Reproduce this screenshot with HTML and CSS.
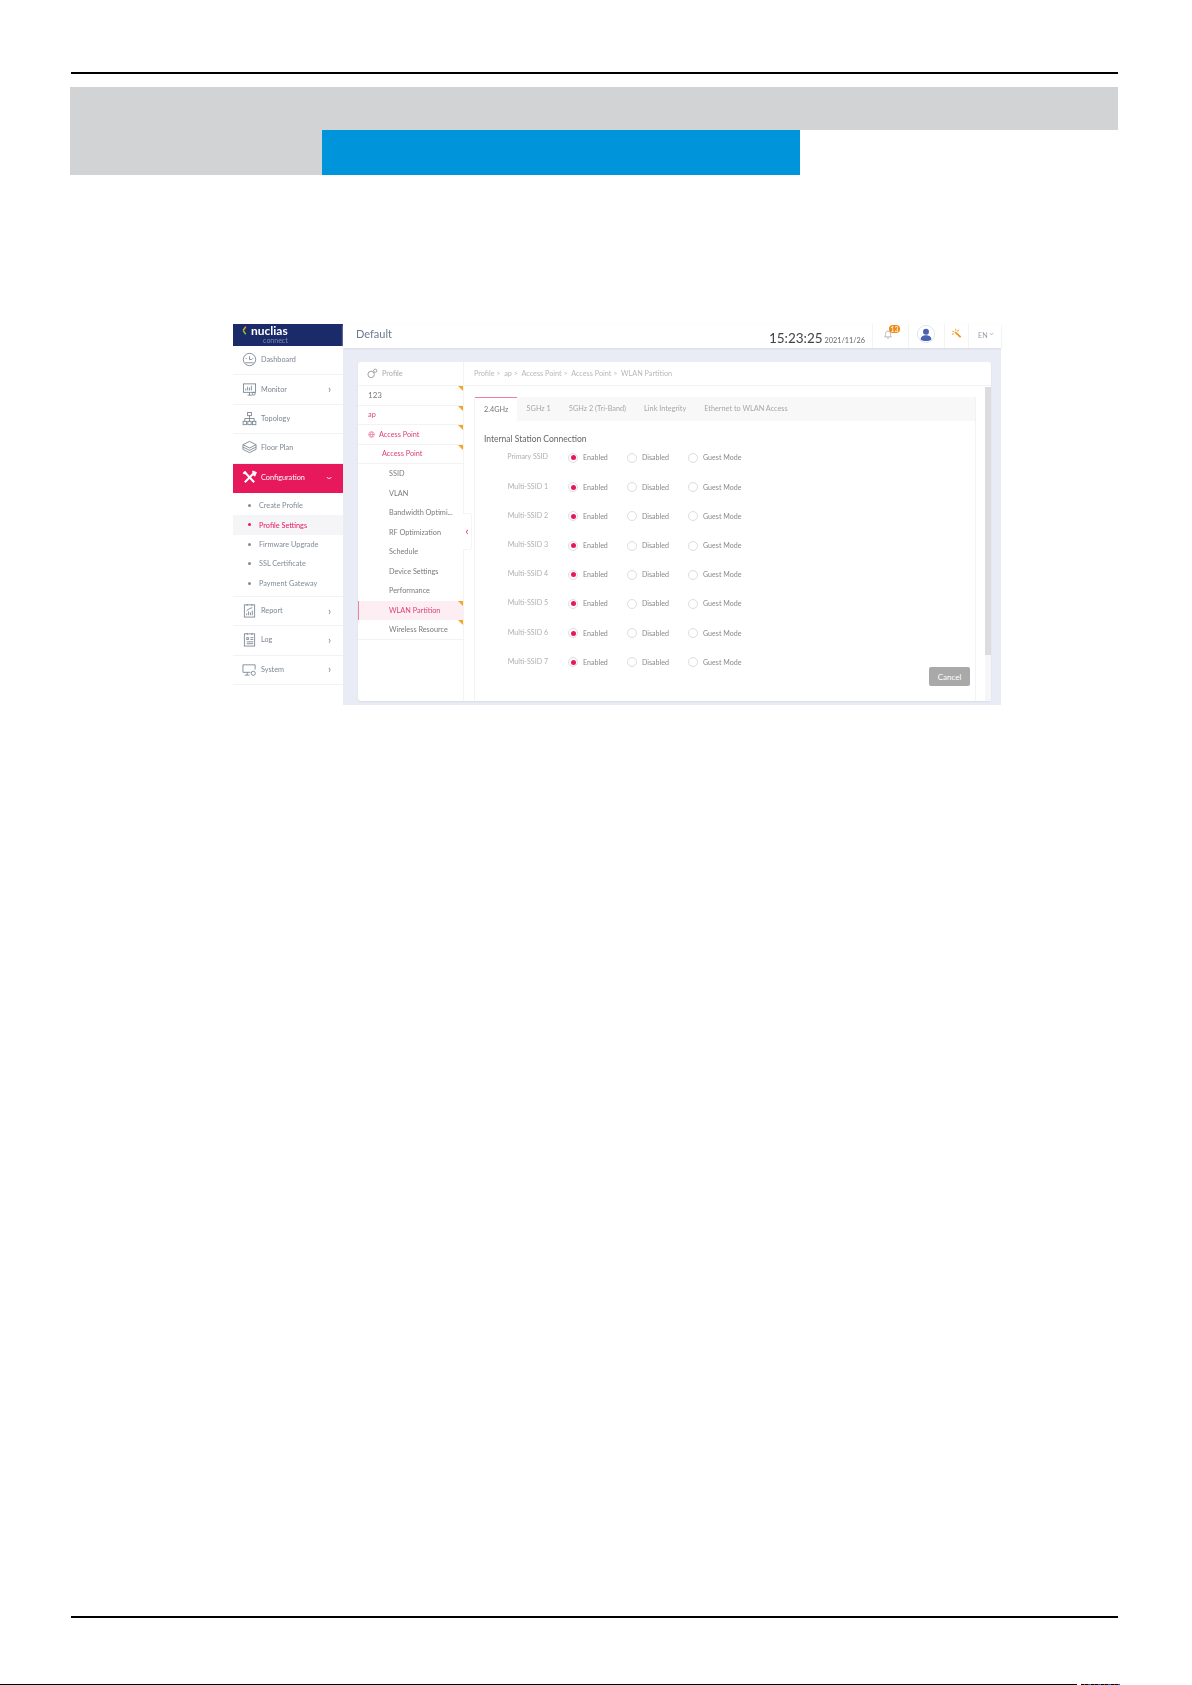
FILE: index.html
```html
<!DOCTYPE html>
<html lang="en">
<head>
    <meta charset="UTF-8">
    <meta name="viewport" content="width=device-width, initial-scale=1.0">
    <title>WLAN Partition</title>
    <link rel="stylesheet" href="styles.css">
</head>
<body>
    <div class="rule rule-top"></div>

    <div class="banner">
        <div class="banner-band"></div>
        <div class="banner-row">
            <div class="banner-grey"></div>
            <div class="banner-blue"></div>
        </div>
    </div>

    <div class="shot">
        <aside class="sidebar">
            <div class="logo">
                <svg class="logo-mark" viewBox="0 0 8 12"><path d="M5 1 1.5 6" stroke="#f5a623" stroke-width="1.8" fill="none"/><path d="M1.5 6 5 11" stroke="#7ed321" stroke-width="1.8" fill="none"/></svg>
                <div class="logo-text">
                    <span class="logo-name">nuclias</span>
                    <span class="logo-sub">connect</span>
                </div>
            </div>

            <a class="nav-item">
                <svg class="nav-icon" viewBox="0 0 16 16"><circle cx="8" cy="8" r="6.6"/><path d="M3.5 11.5h9M8 8V4.5M8 8h2.5M4 7h1M11 7h1"/></svg>
                <span>Dashboard</span>
            </a>
            <a class="nav-item">
                <svg class="nav-icon" viewBox="0 0 16 16"><rect x="1.5" y="2" width="13" height="9"/><path d="M4 9V7M6 9V5M8 9V6M10 9V4M6 14h5M8 11v3"/><circle cx="12.5" cy="12.5" r="1.5"/></svg>
                <span>Monitor</span>
                <span class="nav-arrow">›</span>
            </a>
            <a class="nav-item">
                <svg class="nav-icon" viewBox="0 0 16 16"><rect x="6" y="1.5" width="4" height="3.5"/><path d="M8 5v3M3 11V8h10v3M8 8v3"/><rect x="1.2" y="11" width="3.6" height="3.6"/><rect x="6.2" y="11" width="3.6" height="3.6"/><rect x="11.2" y="11" width="3.6" height="3.6"/></svg>
                <span>Topology</span>
            </a>
            <a class="nav-item">
                <svg class="nav-icon" viewBox="0 0 16 16"><path d="M8 1.5 15 5 8 8.5 1 5zM1 5v2.5L8 11l7-3.5V5M1 7.5V10l7 3.5 7-3.5V7.5"/></svg>
                <span>Floor Plan</span>
            </a>
            <a class="nav-item nav-active">
                <svg class="nav-icon" viewBox="0 0 16 16"><path class="tool-x" d="M3 13 13 3M3.5 3 13 13"/><path class="tool-x" d="M1.5 4 4 1.5M11 1.5l3.5 1.5-1.5 3.5"/></svg>
                <span>Configuration</span>
                <span class="nav-arrow nav-arrow-down">›</span>
            </a>
            <div class="subnav">
                <a class="sub-item">Create Profile</a>
                <a class="sub-item sub-active">Profile Settings</a>
                <a class="sub-item">Firmware Upgrade</a>
                <a class="sub-item">SSL Certificate</a>
                <a class="sub-item">Payment Gateway</a>
            </div>
            <a class="nav-item">
                <svg class="nav-icon" viewBox="0 0 16 16"><rect x="2.5" y="2" width="11" height="13"/><path d="M5.5 1v2M10.5 1v2M5 13v-2M7 13V9M9 13v-3M11 13V8M5 8l3-2 3-1"/></svg>
                <span>Report</span>
                <span class="nav-arrow">›</span>
            </a>
            <a class="nav-item">
                <svg class="nav-icon" viewBox="0 0 16 16"><rect x="2.5" y="2" width="11" height="13"/><path d="M5.5 1v2M10.5 1v2M5 6h2v2H5zM9 6h3M9 8h3M5 10.5h7M5 12.5h7"/></svg>
                <span>Log</span>
                <span class="nav-arrow">›</span>
            </a>
            <a class="nav-item">
                <svg class="nav-icon" viewBox="0 0 16 16"><path d="M9 11H1V3h13v5M3 14h5M5.5 11v3"/><circle cx="12" cy="12" r="2.2"/></svg>
                <span>System</span>
                <span class="nav-arrow">›</span>
            </a>
        </aside>

        <div class="main">
            <header class="topbar">
                <div class="topbar-title">Default</div>
                <div class="clock"><span class="clock-time">15:23:25</span> <span class="clock-date">2021/11/26</span></div>
                <div class="top-cell cell-bell">
                    <svg class="bell" viewBox="0 0 12 12"><path d="M2 9.5c1-1 1-2.5 1-4 0-1.7 1.3-3 3-3s3 1.3 3 3c0 1.500 0 3 1 4zM5 11h2"/></svg>
                    <span class="badge">13</span>
                </div>
                <div class="top-cell cell-user">
                    <svg class="avatar" viewBox="0 0 20 20"><circle cx="10" cy="10" r="9.5" fill="#fff" stroke="#dfe2ea"/><circle cx="10" cy="7.5" r="3.300" fill="#4a63b0"/><path d="M4 16c.5-3.500 3-4.500 6-4.500s5.500 1 6 4.500c-3 2.500-9 2.500-12 0z" fill="#4a63b0"/></svg>
                </div>
                <div class="top-cell cell-wand">
                    <svg class="wand" viewBox="0 0 12 12"><path d="M4.5 4.5 10.5 10" stroke="#f5921e" stroke-width="2"/><path d="M1.5 3.500 3.500 4.200M5 .8l.3 2.200M8.500 2 6.800 3.800M1 7l2-1" stroke="#f5a83a" stroke-width="1.200"/></svg>
                </div>
                <div class="lang">EN <span class="lang-arrow">›</span></div>
            </header>

            <div class="content">
                <div class="panel">
                    <div class="tree">
                        <div class="tree-head">
                            <svg class="tree-head-icon" viewBox="0 0 12 12"><circle cx="4.5" cy="7" r="3.500"/><circle cx="9" cy="3" r="1.800"/></svg>
                            Profile
                        </div>
                        <div class="tree-row tree-line tree-top mark">123</div>
                        <div class="tree-row tree-line tree-pink mark">ap</div>
                        <div class="tree-row tree-line tree-pink mark">
                            <svg class="tree-globe" viewBox="0 0 12 12"><circle cx="6" cy="6" r="4.800"/><path d="M1.5 6h9M6 1.200c-3 3-3 6.600 0 9.600M6 1.200c3 3 3 6.600 0 9.600"/></svg>
                            Access Point
                        </div>
                        <div class="tree-row tree-line tree-pink tree-child mark">Access Point</div>
                        <div class="tree-row tree-leaf">SSID</div>
                        <div class="tree-row tree-leaf">VLAN</div>
                        <div class="tree-row tree-leaf">Bandwidth Optimi...</div>
                        <div class="tree-row tree-leaf">RF Optimization</div>
                        <div class="tree-row tree-leaf">Schedule</div>
                        <div class="tree-row tree-leaf">Device Settings</div>
                        <div class="tree-row tree-leaf">Performance</div>
                        <div class="tree-row tree-leaf tree-selected mark">WLAN Partition</div>
                        <div class="tree-row tree-leaf tree-line mark">Wireless Resource</div>
                    </div>
                    <div class="collapse">‹</div>

                    <div class="detail">
                        <div class="crumbs">Profile &gt;&nbsp; ap &gt;&nbsp; Access Point &gt;&nbsp; Access Point &gt;&nbsp; WLAN Partition</div>
                        <div class="detail-body">
                            <div class="tabbox">
                                <div class="tabs">
                                    <div class="tab tab-active">2.4GHz</div>
                                    <div class="tab">5GHz 1</div>
                                    <div class="tab">5GHz 2 (Tri-Band)</div>
                                    <div class="tab">Link Integrity</div>
                                    <div class="tab">Ethernet to WLAN Access</div>
                                </div>
                                <div class="form-title">Internal Station Connection</div>
                                <div class="form-row">
                                    <div class="form-label">Primary SSID</div>
                                    <div class="opt"><i class="radio radio-on"></i>Enabled</div>
                                    <div class="opt"><i class="radio"></i>Disabled</div>
                                    <div class="opt"><i class="radio"></i>Guest Mode</div>
                                </div>
                                <div class="form-row">
                                    <div class="form-label">Multi-SSID 1</div>
                                    <div class="opt"><i class="radio radio-on"></i>Enabled</div>
                                    <div class="opt"><i class="radio"></i>Disabled</div>
                                    <div class="opt"><i class="radio"></i>Guest Mode</div>
                                </div>
                                <div class="form-row">
                                    <div class="form-label">Multi-SSID 2</div>
                                    <div class="opt"><i class="radio radio-on"></i>Enabled</div>
                                    <div class="opt"><i class="radio"></i>Disabled</div>
                                    <div class="opt"><i class="radio"></i>Guest Mode</div>
                                </div>
                                <div class="form-row">
                                    <div class="form-label">Multi-SSID 3</div>
                                    <div class="opt"><i class="radio radio-on"></i>Enabled</div>
                                    <div class="opt"><i class="radio"></i>Disabled</div>
                                    <div class="opt"><i class="radio"></i>Guest Mode</div>
                                </div>
                                <div class="form-row">
                                    <div class="form-label">Multi-SSID 4</div>
                                    <div class="opt"><i class="radio radio-on"></i>Enabled</div>
                                    <div class="opt"><i class="radio"></i>Disabled</div>
                                    <div class="opt"><i class="radio"></i>Guest Mode</div>
                                </div>
                                <div class="form-row">
                                    <div class="form-label">Multi-SSID 5</div>
                                    <div class="opt"><i class="radio radio-on"></i>Enabled</div>
                                    <div class="opt"><i class="radio"></i>Disabled</div>
                                    <div class="opt"><i class="radio"></i>Guest Mode</div>
                                </div>
                                <div class="form-row">
                                    <div class="form-label">Multi-SSID 6</div>
                                    <div class="opt"><i class="radio radio-on"></i>Enabled</div>
                                    <div class="opt"><i class="radio"></i>Disabled</div>
                                    <div class="opt"><i class="radio"></i>Guest Mode</div>
                                </div>
                                <div class="form-row">
                                    <div class="form-label">Multi-SSID 7</div>
                                    <div class="opt"><i class="radio radio-on"></i>Enabled</div>
                                    <div class="opt"><i class="radio"></i>Disabled</div>
                                    <div class="opt"><i class="radio"></i>Guest Mode</div>
                                </div>
                            </div>
                            <div class="scrollbar"><div class="scrollbar-thumb"></div></div>
                        </div>
                    </div>
                    <button class="cancel">Cancel</button>
                </div>
            </div>
        </div>
    </div>

    <div class="rule rule-bottom"></div>
    <div class="edge">
        <div class="edge-line"></div>
        <div class="edge-noise"></div>
    </div>
</body>
</html>
```

FILE: styles.css
```css
body {
    margin: 0;
    background-color: #fff;
    font-family: Lato, "Open Sans", sans-serif;
    height: 1685px;
    overflow: hidden;
}

/* page furniture */
.rule {
    height: 2px;
    margin-left: 71px;
    width: 1047px;
    background-color: #000;
}

.rule-top {
    margin-top: 72px;
}

.rule-bottom {
    margin-top: 911px;
}

.banner {
    margin: 13px 0 0 70px;
    width: 1048px;
}

.banner-band {
    height: 43px;
    background-color: #d1d3d4;
}

.banner-row {
    display: flex;
    height: 45px;
}

.banner-grey {
    width: 252px;
    background-color: #d1d3d4;
}

.banner-blue {
    width: 478px;
    background-color: #0095da;
}

.edge {
    display: flex;
    margin-top: 66px;
    height: 1px;
}

.edge-line {
    width: 1077px;
    background-color: #000;
}

.edge-noise {
    width: 39px;
    margin-left: 4px;
    background: repeating-linear-gradient(90deg, #000 0 3px, #c3262e 3px 4px, #000 4px 7px, #1d4fd0 7px 9px, #1a8a3a 9px 10px);
}

/* the application screenshot */
.shot {
    display: flex;
    margin: 149px 0 0 233px;
    width: 768px;
    height: 381px;
    filter: blur(0.55px);
    color: #7d8794;
    font-size: 7.3px;
}

.sidebar {
    width: 110px;
    flex-shrink: 0;
    background-color: #fff;
}

.logo {
    display: flex;
    align-items: flex-start;
    height: 22px;
    padding-left: 9px;
    box-sizing: border-box;
    background-color: #1b2a68;
}

.logo-mark {
    width: 6px;
    height: 9px;
    margin: 2px 3px 0 0;
}

.logo-text {
    display: flex;
    flex-direction: column;
    align-items: flex-end;
}

.logo-name {
    color: #fff;
    font-size: 12px;
    font-weight: 700;
    line-height: 13px;
}

.logo-sub {
    color: #7f8ab0;
    font-size: 7px;
    line-height: 7px;
}

.nav-item {
    display: flex;
    align-items: center;
    height: 29.4px;
    box-sizing: border-box;
    padding: 0 0 1px 9px;
    border-bottom: 1px solid #f1f2f4;
}

.nav-icon {
    width: 15px;
    height: 15px;
    margin-right: 4px;
    fill: none;
    stroke: #75808f;
    stroke-width: 0.9;
}

.nav-arrow {
    margin-left: auto;
    margin-right: 12px;
    font-size: 11px;
    line-height: 10px;
}

.nav-arrow-down {
    transform: rotate(90deg);
}

.nav-active {
    background-color: #e8185c;
    color: #fff;
    border-bottom: none;
}

.nav-active .nav-icon {
    stroke: #fff;
}

.tool-x {
    stroke-width: 2.2;
}

.subnav {
    padding: 3px 0 3px;
    border-bottom: 1px solid #f1f2f4;
}

.sub-item {
    display: flex;
    align-items: center;
    height: 19.4px;
    padding-left: 26px;
    color: #818b99;
    position: relative;
}

.sub-item::before {
    content: "";
    position: absolute;
    left: 15px;
    top: 8px;
    width: 3px;
    height: 3px;
    border-radius: 50%;
    background-color: #818b99;
}

.sub-active {
    background-color: #f5f5f7;
    color: #e8185c;
}

.sub-active::before {
    background-color: #e8185c;
}

.main {
    flex: 1;
    display: flex;
    flex-direction: column;
    background-color: #e9ecf5;
}

.topbar {
    display: flex;
    align-items: center;
    height: 24px;
    flex-shrink: 0;
    background-color: #fff;
    box-shadow: 0 1px 2px #d8dbe6;
}

.topbar-title {
    margin-left: 13px;
    padding-bottom: 5px;
    font-size: 11px;
    color: #6c7a8e;
}

.clock {
    margin-left: auto;
    margin-right: 7px;
    padding-top: 3px;
    color: #444;
    white-space: nowrap;
}

.clock-time {
    font-size: 13.5px;
}

.clock-date {
    font-size: 7.3px;
    color: #666;
}

.top-cell {
    position: relative;
    display: flex;
    align-items: center;
    justify-content: center;
    box-sizing: border-box;
    height: 24px;
    padding-bottom: 5px;
    border-left: 1px solid #f2f3f5;
}

.cell-bell {
    width: 36px;
    padding-right: 6px;
}

.cell-user {
    width: 36px;
    padding-right: 2px;
}

.cell-wand {
    width: 25px;
    border-right: 1px solid #f2f3f5;
}

.bell {
    width: 10px;
    height: 10px;
    fill: none;
    stroke: #9aa0a8;
    stroke-width: 0.9;
}

.badge {
    position: absolute;
    left: 16px;
    top: 1px;
    width: 11px;
    height: 8px;
    border-radius: 4px;
    background-color: #ef8a12;
    color: #fff;
    font-size: 7px;
    line-height: 8px;
    text-align: center;
}

.avatar {
    width: 18px;
    height: 18px;
}

.wand {
    width: 11px;
    height: 11px;
    fill: none;
}

.lang {
    width: 32px;
    box-sizing: border-box;
    padding: 0 0 3px 9px;
    font-size: 7.2px;
    color: #98a0aa;
    white-space: nowrap;
}

.lang-arrow {
    display: inline-block;
    margin-left: 3px;
    font-size: 10px;
    line-height: 8px;
    transform: rotate(90deg);
}

.content {
    flex: 1;
    min-height: 0;
    padding: 14px 10px 4px 15px;
}

.panel {
    position: relative;
    display: flex;
    height: 100%;
    background-color: #fff;
    border-radius: 3px;
    box-shadow: 0 1px 2px #d9dce6;
}

/* profile tree */
.tree {
    width: 105px;
    flex-shrink: 0;
    border-right: 1px solid #f3f3f5;
    color: #7b7b7b;
}

.tree-head {
    display: flex;
    align-items: center;
    height: 24px;
    padding-left: 9px;
    border-bottom: 1px solid #f3f3f5;
    box-sizing: border-box;
    color: #aaa;
}

.tree-head-icon {
    width: 11px;
    height: 11px;
    margin-right: 4px;
    fill: none;
    stroke: #999;
}

.tree-row {
    position: relative;
    display: flex;
    align-items: center;
    height: 19.5px;
    box-sizing: border-box;
    padding-left: 10px;
    white-space: nowrap;
}

.tree-top {
    font-size: 8px;
}

.tree-line {
    border-bottom: 1px solid #f3f3f5;
}

.tree-pink {
    color: #de4077;
}

.tree-globe {
    width: 7px;
    height: 7px;
    margin-right: 4px;
    fill: none;
    stroke: #de4077;
    stroke-width: 0.8;
}

.tree-child {
    padding-left: 24px;
}

.tree-leaf {
    padding-left: 31px;
}

.tree-selected {
    background-color: #fdeef3;
    border-left: 1px solid #ee7f9f;
    padding-left: 30px;
    color: #de4077;
}

/* orange corner on edited rows */
.mark::after {
    content: "";
    position: absolute;
    right: 0;
    top: 0;
    border-top: 5px solid #f5a623;
    border-left: 5px solid transparent;
}

.collapse {
    position: absolute;
    left: 105px;
    top: 151px;
    width: 9px;
    height: 37px;
    border: 1px solid #f5f5f7;
    border-left: none;
    border-radius: 0 3px 3px 0;
    box-sizing: border-box;
    background-color: #fff;
    color: #e8185c;
    font-size: 11px;
    line-height: 33px;
    text-align: center;
}

/* right hand side */
.detail {
    flex: 1;
    display: flex;
    flex-direction: column;
    min-width: 0;
}

.crumbs {
    height: 24px;
    flex-shrink: 0;
    box-sizing: border-box;
    padding-left: 10px;
    border-bottom: 1px solid #f3f3f5;
    color: #b8b8b8;
    font-size: 7.25px;
    line-height: 23px;
}

.detail-body {
    flex: 1;
    display: flex;
    min-height: 0;
    padding: 1px 0 0 10px;
}

.tabbox {
    flex: 1;
    margin-top: 10px;
    border-left: 1px solid #f3f3f5;
    border-right: 1px solid #f3f3f5;
}

.tabs {
    display: flex;
    height: 24px;
    background-color: #f8f8f9;
}

.tab {
    padding: 0 9px;
    color: #a8a8a8;
    line-height: 24px;
    white-space: nowrap;
}

.tab-active {
    background-color: #fff;
    border-top: 1px solid #ee7f9f;
    color: #777;
    line-height: 23px;
}

.form-title {
    box-sizing: border-box;
    height: 22.4px;
    padding: 12px 0 0 9px;
    color: #666;
    font-size: 8.5px;
    line-height: 12px;
}

.form-row {
    display: grid;
    grid-template-columns: 93px 59px 61px auto;
    align-items: center;
    height: 29.2px;
    font-size: 7.1px;
}

.form-label {
    text-align: right;
    margin-right: 20px;
    padding-bottom: 2px;
    color: #b0b0b0;
}

.opt {
    display: flex;
    align-items: center;
    color: #8a8a8a;
    white-space: nowrap;
}

.radio {
    position: relative;
    width: 10px;
    height: 10px;
    margin-right: 5px;
    box-sizing: border-box;
    border: 1px solid #dedede;
    border-radius: 50%;
    background-color: #fff;
}

.radio-on::after {
    content: "";
    position: absolute;
    left: 1.5px;
    top: 1.5px;
    width: 5px;
    height: 5px;
    border-radius: 50%;
    background-color: #e8185c;
}

.scrollbar {
    width: 6px;
    margin-left: 9px;
    background-color: #f6f6f6;
}

.scrollbar-thumb {
    height: 268px;
    background-color: #dcdcdc;
}

.cancel {
    position: absolute;
    right: 21px;
    bottom: 15px;
    width: 41px;
    height: 19px;
    padding: 0;
    border: none;
    border-radius: 2px;
    background-color: #a9a9a9;
    color: #fff;
    font-family: Lato, sans-serif;
    font-size: 8px;
}
```
